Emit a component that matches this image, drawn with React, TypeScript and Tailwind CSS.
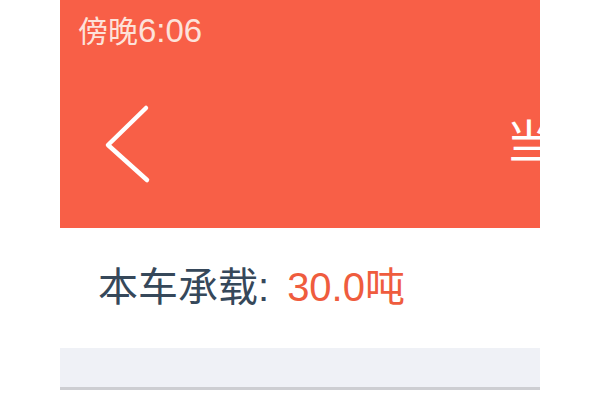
export default function App() {
  return (
    <div className="min-h-[400px] w-full bg-white" style={{ fontFamily: '"Liberation Sans", "Noto Sans CJK SC", sans-serif' }}>
      <div className="mx-auto w-[480px]">
        <header className="h-[228px] overflow-hidden bg-[#f85f47]">
          <div className="flex h-[64px] items-start pl-[18px] pt-[14px]">
            <span className="text-[30px] leading-none text-[#fde2da]">
              傍晚<span className="text-[33px]">6:06</span>
            </span>
          </div>
          <div className="flex h-[160px] items-center whitespace-nowrap pl-[44px]">
            <svg width="48" height="80" viewBox="0 0 48 80" fill="none" className="shrink-0">
              <path d="M42 4 L4 41 L43 76" stroke="white" strokeWidth="4.5" strokeLinecap="round" strokeLinejoin="round" />
            </svg>
            <span className="mb-[5px] ml-[354px] text-[46px] leading-none text-white">当前车辆</span>
          </div>
        </header>

        <div className="flex h-[120px] items-center pb-[2px] pl-[38px]">
          <span className="text-[40px] leading-none text-[#36485a]">本车承载:</span>
          <span className="ml-[18px] text-[40px] leading-none text-[#ef5c3e]">30.0吨</span>
        </div>

        <div className="h-[42px] border-b-[3px] border-[#cdced2] bg-[#eff1f6]" />
      </div>
    </div>
  );
}
